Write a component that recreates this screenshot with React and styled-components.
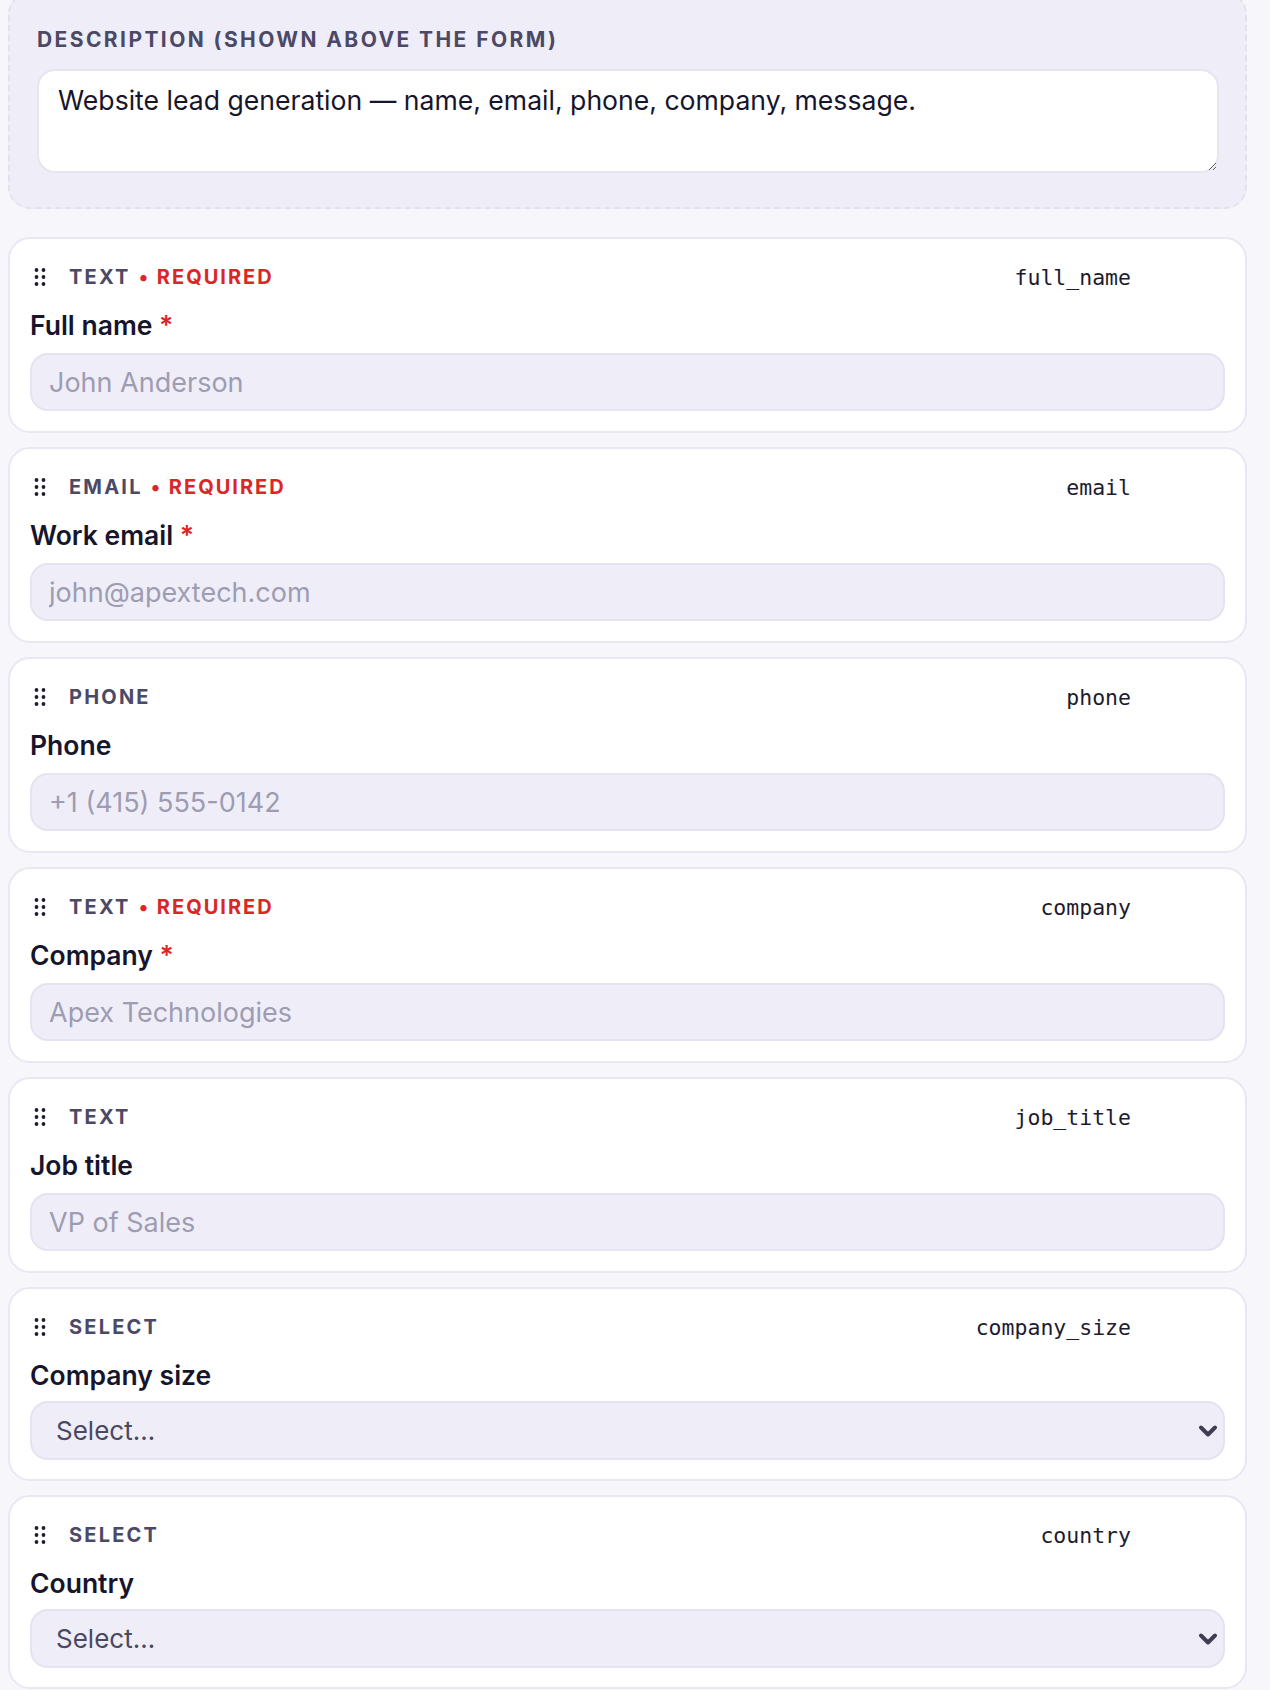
import React from "react";
import styled, { createGlobalStyle } from "styled-components";

const GlobalStyle = createGlobalStyle`
  * {
    box-sizing: border-box;
  }
  html,
  body {
    margin: 0;
    background: #f6f6fb;
  }
  body {
    font-family: Inter, "Noto Sans", sans-serif;
    color: #17152b;
  }
`;

const fields = [
  { type: "text", required: true, name: "full_name", label: "Full name", placeholder: "John Anderson" },
  { type: "email", required: true, name: "email", label: "Work email", placeholder: "john@apextech.com" },
  { type: "phone", name: "phone", label: "Phone", placeholder: "+1 (415) 555-0142" },
  { type: "text", required: true, name: "company", label: "Company", placeholder: "Apex Technologies" },
  { type: "text", name: "job_title", label: "Job title", placeholder: "VP of Sales" },
  { type: "select", name: "company_size", label: "Company size" },
  { type: "select", name: "country", label: "Country" },
];

function Grip() {
  return (
    <GripIcon width="12" height="20" viewBox="0 0 12 20">
      {[3, 10, 17].map((y) => (
        <React.Fragment key={y}>
          <circle cx="2.5" cy={y} r="1.9" />
          <circle cx="9.5" cy={y} r="1.9" />
        </React.Fragment>
      ))}
    </GripIcon>
  );
}

function Chevron() {
  return (
    <ChevronIcon width="20" height="13" viewBox="0 0 20 13">
      <path d="M3 3 L10 10 L17 3" />
    </ChevronIcon>
  );
}

function FieldCard({ field }) {
  const isSelect = field.type === "select";
  return (
    <Card $compact={isSelect}>
      <CardHeader>
        <Grip />
        <TypeTag>{field.type}</TypeTag>
        {field.required && <RequiredTag>• required</RequiredTag>}
        <KeyName>{field.name}</KeyName>
      </CardHeader>
      <FieldLabel>
        {field.label}
        {field.required && <Star> *</Star>}
      </FieldLabel>
      {isSelect ? (
        <SelectWrap>
          <Select defaultValue="">
            <option value="">Select…</option>
          </Select>
          <Chevron />
        </SelectWrap>
      ) : (
        <Input placeholder={field.placeholder} />
      )}
    </Card>
  );
}

export default function App() {
  return (
    <>
      <GlobalStyle />
      <Page>
        <DescriptionPanel>
          <SectionLabel>Description (shown above the form)</SectionLabel>
          <DescriptionBox defaultValue="Website lead generation — name, email, phone, company, message." />
        </DescriptionPanel>
        {fields.map((f) => (
          <FieldCard key={f.name} field={f} />
        ))}
      </Page>
    </>
  );
}

const Page = styled.div`
  display: flex;
  flex-direction: column;
  gap: 14px;
  padding: 0 23px 40px 8px;
`;

const DescriptionPanel = styled.div`
  margin-top: -8px;
  margin-bottom: 14px;
  padding: 34px 26px 34px 27px;
  background: #efeef8;
  border: 2px dashed #e2e1ed;
  border-radius: 22px;
`;

const SectionLabel = styled.div`
  font-size: 21px;
  line-height: 24px;
  font-weight: 700;
  letter-spacing: 0.115em;
  text-transform: uppercase;
  color: #4b4966;
  margin-bottom: 17px;
`;

const DescriptionBox = styled.textarea`
  display: block;
  width: 100%;
  height: 104px;
  padding: 11px 19px;
  font-family: Inter, "Noto Sans", sans-serif;
  font-size: 26.6px;
  line-height: 1.4;
  color: #17152b;
  background: #ffffff;
  border: 2px solid #e6e5f0;
  border-radius: 18px;
  resize: vertical;
  outline: none;
`;

const Card = styled.div`
  display: flex;
  flex-direction: column;
  padding: ${(p) => (p.$compact ? "20px 20px 19px" : "20px")};
  background: #ffffff;
  border: 2px solid #e8e7f2;
  border-radius: 22px;
`;

const CardHeader = styled.div`
  display: flex;
  align-items: center;
  height: 36px;
`;

const GripIcon = styled.svg`
  flex-shrink: 0;
  margin: 0 23px 0 4px;
  fill: #1f1d33;
`;

const TypeTag = styled.span`
  font-size: 20px;
  font-weight: 700;
  letter-spacing: 0.11em;
  text-transform: uppercase;
  color: #4b4966;
`;

const RequiredTag = styled(TypeTag)`
  margin-left: 8px;
  letter-spacing: 0.1em;
  color: #dc2626;
`;

const KeyName = styled.span`
  margin-left: auto;
  margin-right: 94px;
  font-family: "DejaVu Sans Mono", "Liberation Mono", monospace;
  font-size: 21.5px;
  color: #1d1b30;
`;

const FieldLabel = styled.div`
  margin-top: 15px;
  font-size: 26.5px;
  line-height: 30px;
  font-weight: 600;
  color: #17152b;
`;

const Star = styled.span`
  color: #dc2626;
`;

const fieldBox = `
  display: block;
  width: 100%;
  font-family: Inter, "Noto Sans", sans-serif;
  font-size: 27px;
  background: #efeef8;
  border: 2px solid #e4e3ef;
  border-radius: 18px;
  outline: none;
`;

const Input = styled.input`
  ${fieldBox}
  height: 58px;
  margin-top: 13px;
  padding: 0 17px;
  color: #17152b;

  &::placeholder {
    color: #9e9cb2;
  }
`;

const SelectWrap = styled.div`
  position: relative;
  margin-top: 11px;
`;

const Select = styled.select`
  ${fieldBox}
  height: 59px;
  padding: 0 50px 0 24px;
  font-size: 26px;
  color: #4a4862;
  appearance: none;
`;

const ChevronIcon = styled.svg`
  position: absolute;
  right: 7px;
  top: 50%;
  transform: translateY(-50%);
  fill: none;
  stroke: #3f3d56;
  stroke-width: 4;
  stroke-linecap: round;
  stroke-linejoin: round;
  pointer-events: none;
`;
